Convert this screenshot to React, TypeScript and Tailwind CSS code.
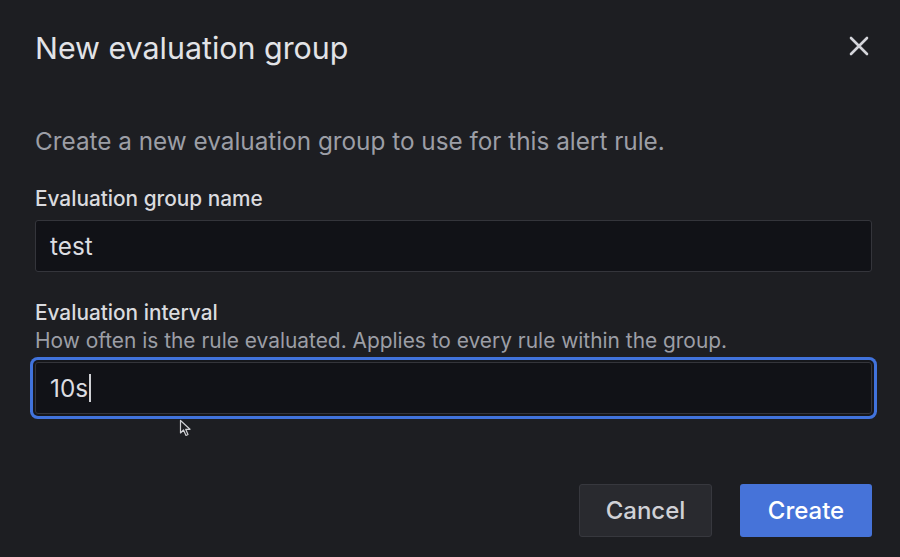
import React from "react";

export default function App() {
  return (
    <div
      className="relative w-[900px] h-[557px] bg-[#1d1e22] text-[#d8d9dd] overflow-hidden flex flex-col pl-[35px] pr-[28px]"
      style={{ fontFamily: "Inter, 'Noto Sans', sans-serif" }}
    >
      <div className="flex items-center justify-between h-[32px] mt-[32px]">
        <h2 className="text-[30.4px] leading-[32px] font-normal text-[#e2e3e7]">New evaluation group</h2>
        <svg width="22" height="22" viewBox="0 0 22 22" className="mr-[2px] mt-[-4px]">
          <path d="M3 3 L19 19 M19 3 L3 19" stroke="#d4d5da" strokeWidth="2.6" strokeLinecap="round" />
        </svg>
      </div>

      <p className="mt-[63px] text-[24.3px] leading-[28px] text-[#9c9ea6]">
        Create a new evaluation group to use for this alert rule.
      </p>

      <label className="mt-[32px] text-[20.8px] leading-[24px] font-medium text-[#dadbdf]">
        Evaluation group name
      </label>
      <div className="mt-[9px] h-[52px] rounded-[3px] border border-[#34353b] bg-[#111217] flex items-center px-[14px]">
        <span className="text-[24.3px] text-[#dcdde1]">test</span>
      </div>

      <label className="mt-[29px] text-[20.8px] leading-[24px] font-medium text-[#dadbdf]">
        Evaluation interval
      </label>
      <p className="mt-[4px] text-[20.9px] leading-[24px] text-[#9c9ea6]">
        How often is the rule evaluated. Applies to every rule within the group.
      </p>
      <div className="mt-[9px] h-[52px] rounded-[3px] border border-[#34353b] bg-[#111217] flex items-center px-[14px] shadow-[0_0_0_2px_#16171b,0_0_0_5px_#4173dc]">
        <span className="text-[24.3px] text-[#dcdde1]">10s</span>
        <span className="w-[2px] h-[28px] bg-[#cfd0d4] ml-[1px]" />
      </div>

      <div className="mt-[70px] flex justify-end gap-[28px]">
        <button className="w-[133px] h-[53px] rounded-[3px] border border-[#37383e] bg-[#292a2f] text-[24px] font-medium text-[#d0d1d6]">
          Cancel
        </button>
        <button className="w-[132px] h-[53px] rounded-[3px] bg-[#4673d9] text-[24px] font-medium text-white">
          Create
        </button>
      </div>

      <svg className="absolute left-[179px] top-[419px]" width="14" height="18" viewBox="0 0 14 18">
        <path d="M1.5 1.5 L1.5 14 L4.5 11 L7 16.5 L9 15.5 L6.7 10.3 L11 10.3 Z" fill="#1d1e22" stroke="#cfd0d4" strokeWidth="1.2" strokeLinejoin="round" />
      </svg>
    </div>
  );
}
